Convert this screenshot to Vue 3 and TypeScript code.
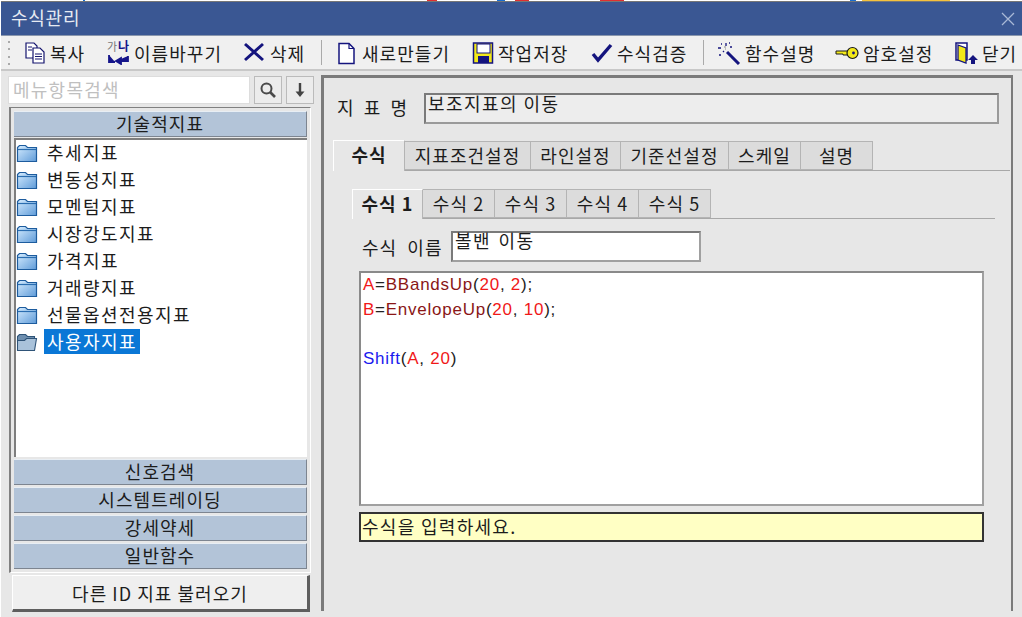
<script setup lang="ts">
import { ref } from 'vue'

const tools = ref([
  { id: 'copy', label: '복사', w: 83, tx: 2 },
  { id: 'rename', label: '이름바꾸기', w: 137, tx: 3 },
  { id: 'del', label: '삭제', w: 77, tx: 2 },
  { id: 'sep', label: '', w: 0, tx: 0 },
  { id: 'new', label: '새로만들기', w: 135, tx: 1 },
  { id: 'save', label: '작업저장', w: 119, tx: 2 },
  { id: 'check', label: '수식검증', w: 112, tx: 2 },
  { id: 'sep2', label: '', w: 0, tx: 0 },
  { id: 'wand', label: '함수설명', w: 118, tx: 4 },
  { id: 'key', label: '암호설정', w: 120, tx: 4 },
  { id: 'door', label: '닫기', w: 60, tx: 3 },
])
const folders = ['추세지표', '변동성지표', '모멘텀지표', '시장강도지표', '가격지표', '거래량지표', '선물옵션전용지표', '사용자지표']
const groups = ['신호검색', '시스템트레이딩', '강세약세', '일반함수']
const tabs = [
  { t: '수식', w: 72 }, { t: '지표조건설정', w: 126 }, { t: '라인설정', w: 90 },
  { t: '기준선설정', w: 108 }, { t: '스케일', w: 72 }, { t: '설명', w: 72 },
]
const subTabs = ['수식 1', '수식 2', '수식 3', '수식 4', '수식 5']
</script>

<template>
  <div class="screen">
    <div class="topstrip">
      <i class="bit" style="left:83px;width:2px;background:#1a6fd0"></i>
      <i class="bit" style="left:427px;width:10px;background:#e03030"></i>
      <i class="bit" style="left:497px;width:8px;background:#1a6fd0"></i>
      <i class="bit" style="left:515px;width:14px;background:#e03030"></i>
      <i class="bit" style="left:600px;width:24px;background:#e03030"></i>
      <i class="bit" style="left:850px;width:6px;background:#1a6fd0"></i>
      <i class="bit" style="left:862px;width:88px;background:#f5c23c"></i>
    </div>
    <div class="window">
      <header class="titlebar">
        <span class="title">수식관리</span>
        <svg class="close" width="14" height="14" viewBox="0 0 14 14"><path d="M1 1L13 13M13 1L1 13" stroke="#a9b8d6" stroke-width="1.3" fill="none"/></svg>
      </header>

      <div class="toolbar">
        <div class="grip"><i></i><i></i><i></i><i></i></div>
        <template v-for="(b, i) in tools" :key="i">
          <div v-if="b.id === 'sep'" class="sep"></div>
          <div v-else-if="b.id === 'sep2'" class="sep narrow"></div>
          <div v-else class="tool" :style="{ width: b.w + 'px' }">
            <span v-if="b.id === 'rename'" class="renameico" :style="{ marginRight: b.tx + 'px' }">
              <span class="ga">가</span>
              <span class="na">나</span>
              <svg width="24" height="24" viewBox="0 0 24 24" class="ico">
                <path d="M2 14v7h6M9 20h12v-5M14 17l-5 3 5 3z" fill="#14148a" stroke="#14148a" stroke-width="1.8"/>
              </svg>
            </span>
            <svg v-else width="24" height="24" viewBox="0 0 24 24" class="ico" :style="{ marginRight: b.tx + 'px' }">
              <g v-if="b.id === 'copy'" fill="#fff" stroke="#14146e" stroke-width="1.2">
                <path d="M2 2h8l3 3v12H2z" /><path d="M9 7h7l4 4v11H9z"/>
                <path d="M11 13h7M11 15.5h7M11 18h7M4 6h4M4 9h4" fill="none"/>
              </g>
              <g v-else-if="b.id === 'del'">
                <path d="M1 3L19 19M19 3L1 19" stroke="#14147e" stroke-width="3" fill="none"/>
              </g>
              <g v-else-if="b.id === 'new'">
                <path d="M2 2.5h10l5 5v15H2z" fill="#fff" stroke="#14147e" stroke-width="1.5"/>
                <path d="M12 2.5v5h5" fill="none" stroke="#14147e" stroke-width="1.2"/>
              </g>
              <g v-else-if="b.id === 'save'">
                <rect x="1.5" y="2" width="19" height="20" fill="#f2e81a" stroke="#14147e" stroke-width="1.5"/>
                <rect x="5" y="3" width="13" height="9" fill="#fff" stroke="#14147e"/>
                <rect x="6" y="15" width="11" height="7" fill="#14147e"/>
              </g>
              <g v-else-if="b.id === 'check'">
                <path d="M2 13l5 6L20 4" fill="none" stroke="#14147e" stroke-width="3.4"/>
              </g>
              <g v-else-if="b.id === 'wand'">
                <path d="M10 11L22 23" stroke="#14147e" stroke-width="3"/>
                <path d="M1 7h3M9 2v3M13 6h2M2 14h2M6 10l1 1M12 2h1M4 3h1" stroke="#14147e" stroke-width="1.3"/>
                <path d="M7 6h2M8 8h1" stroke="#888" stroke-width="1"/>
              </g>
              <g v-else-if="b.id === 'key'">
                <path d="M1 10h12v4H8v-1H1z" fill="#f3e91a" stroke="#1a1a1a" stroke-width="1"/>
                <circle cx="17.5" cy="12" r="5.5" fill="#f3e91a" stroke="#1a1a1a" stroke-width="1.2"/>
                <circle cx="18.5" cy="12" r="1.4" fill="#14147e"/>
              </g>
              <g v-else>
                <path d="M1 2h11v17H1z" fill="#fff" stroke="#14147e" stroke-width="1.5"/>
                <path d="M3 4l8 3v15l-8-3z" fill="#f2e81a" stroke="#14147e" stroke-width="1.3"/>
                <path d="M18 14l5 5h-3v4h-4v-4h-3z" fill="#14147e"/>
              </g>
            </svg>
            <span>{{ b.label }}</span>
          </div>
        </template>
      </div>

      <div class="body">
        <aside class="left">
          <div class="searchrow">
            <div class="search">메뉴항목검색</div>
            <button class="sbtn">
              <svg width="18" height="18" viewBox="0 0 18 18"><circle cx="7.5" cy="7.5" r="5" fill="none" stroke="#4a4a4a" stroke-width="2"/><path d="M11 11l5 5" stroke="#4a4a4a" stroke-width="2.6"/></svg>
            </button>
            <button class="sbtn">
              <svg width="14" height="16" viewBox="0 0 14 16"><path d="M7 1v10" stroke="#444" stroke-width="2.4"/><path d="M2.5 9.5h9L7 15z" fill="#444"/></svg>
            </button>
          </div>

          <div class="accordion">
            <div class="ghead first">기술적지표</div>
            <ul class="tree">
              <li v-for="(f, i) in folders" :key="f" class="node">
                <svg width="22" height="20" viewBox="0 0 22 20" class="folder">
                  <defs>
                    <linearGradient :id="'fg' + i" x1="0" y1="0" x2="1" y2="1">
                      <stop offset="0" stop-color="#d5ecff"/><stop offset="1" stop-color="#5f9bd8"/>
                    </linearGradient>
                  </defs>
                  <template v-if="i < 7">
                    <path d="M1.5 4.5l2-2h6l2 2h9v14h-19z" :fill="'url(#fg' + i + ')'" stroke="#1d5c9e" stroke-width="1.2"/>
                    <path d="M2 6.5h18" stroke="#2a6db0" stroke-width="1.2"/>
                  </template>
                  <template v-else>
                    <path d="M1.5 4.5l2-2h6l2 2h7v5h-17z" fill="#6d8eaf" stroke="#2f5478" stroke-width="1.1"/>
                    <path d="M1.5 18.5l-0-10h7l2-2h10l-2 12z" fill="#a9c2da" stroke="#2f5478" stroke-width="1.1"/>
                  </template>
                </svg>
                <span class="nlabel" :class="{ sel: i === 7 }">{{ f }}</span>
              </li>
            </ul>
            <div v-for="g in groups" :key="g" class="ghead">{{ g }}</div>
          </div>

          <button class="other">다른 ID 지표 불러오기</button>
        </aside>

        <main class="right">
          <div class="namerow">
            <span class="namelabel">지 표 명</span>
            <div class="namefield">보조지표의 이동</div>
          </div>

          <div class="tabs">
            <div v-for="(t, i) in tabs" :key="t.t" class="tab" :class="{ on: i === 0 }" :style="{ width: t.w + 'px' }">{{ t.t }}</div>
          </div>

          <div class="pane">
            <div class="subtabs">
              <div v-for="(t, i) in subTabs" :key="t" class="subtab" :class="{ on: i === 0 }">{{ t }}</div>
            </div>
            <div class="formula">
              <span class="flabel">수식 이름</span>
              <div class="finput">볼밴 이동</div>
            </div>
            <div class="editor">
              <div><b class="r">A</b>=<b class="d">BBandsUp</b>(<b class="r">20</b>, <b class="r">2</b>);</div>
              <div><b class="r">B</b>=<b class="d">EnvelopeUp</b>(<b class="r">20</b>, <b class="r">10</b>);</div>
              <div>&nbsp;</div>
              <div><b class="u">Shift</b>(<b class="r">A</b>, <b class="r">20</b>)</div>
            </div>
            <div class="hint">수식을 입력하세요.</div>
          </div>
        </main>
      </div>
    </div>
  </div>
</template>

<style scoped>
.screen { width: 1022px; height: 617px; background: #fff; overflow: hidden; position: relative; font-family: "Noto Sans CJK KR", "Liberation Sans", sans-serif; color: #1c1c1c; }
.topstrip { height: 1px; position: relative; }
.bit { position: absolute; top: 0; height: 1px; }
.window { margin-left: 1px; height: 616px; background: #e7e7e7; border-top: 1px solid #777; display: flex; flex-direction: column; }
.titlebar { height: 33px; background: #3a5793; display: flex; align-items: center; justify-content: space-between; padding: 0 7px 0 10px; border-bottom: 1px solid #8a97ad; box-sizing: content-box; }
.title { color: #e6eaf2; font-size: 18px; letter-spacing: 0.75px; padding-bottom: 3px; }
.toolbar { height: 33px; background: #f0f0f0; display: flex; align-items: center; padding-left: 7px; border-bottom: 2px solid #c8c8c8; }
.grip { width: 7px; height: 24px; margin-right: 9px; display: flex; flex-direction: column; justify-content: space-between; padding-top: 1px; }
.grip i { width: 2px; height: 2px; background: #aaa; display: block; }
.tool { display: flex; align-items: center; font-size: 18px; letter-spacing: 1.05px; white-space: nowrap; flex: none; }
.ico { flex: none; display: block; }
.renameico { position: relative; width: 24px; height: 24px; flex: none; display: block; }
.ga, .na { position: absolute; top: -1px; line-height: 12px; letter-spacing: 0; }
.ga { left: 0; font-size: 11px; color: #777; }
.na { left: 11px; font-size: 12px; font-weight: 700; color: #14148a; }
.sep { width: 1px; height: 25px; background: #aaa; margin-right: 15px; flex: none; }
.sep.narrow { margin-right: 13px; }
.body { flex: 1; display: flex; padding: 4px 9px 6px 3px; gap: 6px; min-height: 0; }
.left { width: 311px; display: flex; flex-direction: column; flex: none; }
.searchrow { display: flex; gap: 4px; padding: 1px 0 0 4px; height: 29px; box-sizing: border-box; }
.search { width: 242px; height: 28px; background: #fff; box-sizing: border-box; border: 1px solid #ddd; color: #c0c0c0; font-size: 18px; letter-spacing: 1.25px; line-height: 25px; padding-left: 4px; }
.sbtn { width: 28px; height: 28px; padding: 0; background: #ececec; border: 1px solid #fff; border-right-color: #8f8f8f; border-bottom-color: #8f8f8f; display: flex; align-items: center; justify-content: center; outline: 1px solid #bbb; outline-offset: -1px; }
.accordion { margin: 3px 0 0 5px; width: 302px; height: 467px; box-sizing: border-box; padding: 3px 3px 3px 3px; border: 1px solid #fff; border-left: 2px solid #808080; border-top-color: #808080; display: flex; flex-direction: column; gap: 2px; }
.ghead { flex: none; background: #b3c4d8; border-bottom: 1px solid #7d8590; border-right: 1px solid #7d8590; border-top: 1px solid #e8eef4; text-align: center; font-size: 18px; line-height: 22px; letter-spacing: 1.05px; height: 24px; }
.ghead.first { margin-bottom: -1px; }
.tree { flex: 1; min-height: 0; background: #fff; margin: 0; padding: 0; list-style: none; border-left: 2px solid #7e7e7e; border-top: 2px solid #7e7e7e; }
.node { height: 27px; display: flex; align-items: center; }
.node:first-child { margin-top: -1px; }
.folder { flex: none; margin-right: 6px; }
.nlabel { font-size: 18px; letter-spacing: 1.45px; line-height: 25px; padding: 0 3px; }
.nlabel.sel { background: #0a77d6; color: #fff; }
.other { margin: 2px 0 0 8px; width: 298px; height: 37px; background: #efefef; border: none; border-top: 1px solid #fff; border-left: 1px solid #fff; border-right: 3px solid #5e5e5e; border-bottom: 3px solid #5e5e5e; font-family: inherit; font-size: 18px; letter-spacing: 1.05px; color: #1c1c1c; padding: 0; }
.right { flex: 1; border-left: 3px solid #7b7b7b; border-top: 3px solid #7b7b7b; border-right: 2px solid #7b7b7b; background: #e7e7e7; margin-bottom: 1px; padding: 15px 1px 0 9px; }
.namerow { display: flex; align-items: center; height: 31px; padding-left: 4px; }
.namelabel { width: 87px; font-size: 18px; letter-spacing: 1.05px; word-spacing: 4px; flex: none; padding-bottom: 3px; }
.namefield { width: 575px; height: 31px; box-sizing: border-box; background: #ededed; border: 2px solid #7a7a7a; border-bottom-color: #9a9a9a; border-right-color: #9a9a9a; font-size: 18px; letter-spacing: 1.45px; line-height: 17px; padding-left: 2px; }
.tabs { display: flex; margin-top: 16px; height: 30px; border-bottom: 1px solid #a8a8a8; }
.tab { box-sizing: border-box; height: 29px; margin-top: 1px; background: #dcdcdc; border: 1px solid #b4b4b4; border-left: none; text-align: center; font-size: 18px; line-height: 26px; letter-spacing: 1.05px; }
.tab.on { height: 31px; margin-top: 0; background: #e7e7e7; border-left: 1px solid #fff; border-top: 1px solid #fff; border-bottom: none; font-weight: 700; position: relative; z-index: 1; }
.pane { padding: 18px 0 0 19px; }
.subtabs { display: flex; width: 643px; height: 30px; border-bottom: 1px solid #a8a8a8; box-sizing: border-box; }
.subtab { box-sizing: border-box; width: 72px; height: 29px; background: #dcdcdc; border: 1px solid #b4b4b4; border-left: none; text-align: center; font-size: 18px; line-height: 26px; letter-spacing: 1.05px; }
.subtab.on { height: 30px; width: 71px; background: #e7e7e7; border-left: 1px solid #fff; border-top: 1px solid #fff; border-bottom: none; font-weight: 700; }
.formula { display: flex; align-items: center; margin-top: 12px; margin-left: 10px; }
.flabel { width: 89px; flex: none; font-size: 18px; letter-spacing: 1.05px; word-spacing: 5px; }
.finput { width: 250px; height: 31px; box-sizing: border-box; background: #fff; border: 2px solid #7a7a7a; border-bottom-color: #a0a0a0; border-right-color: #a0a0a0; font-size: 18px; letter-spacing: 1.45px; word-spacing: 2px; line-height: 15px; padding-left: 2px; }
.editor { margin: 9px 0 0 7px; width: 625px; height: 235px; box-sizing: border-box; background: #fff; border: 2px solid #8a8a8a; border-bottom-color: #a0a0a0; border-right-color: #a0a0a0; padding: 0 0 0 2px; font-family: "Liberation Sans", sans-serif; font-size: 17px; line-height: 24.5px; letter-spacing: 0.75px; color: #222; }
.editor b { font-weight: 400; }
.r { color: #f01818; }
.d { color: #8a1616; }
.u { color: #1a1aee; }
.hint { margin: 6px 0 0 7px; width: 625px; height: 30px; box-sizing: border-box; background: #ffffc4; border: 2px solid #333; font-size: 18px; letter-spacing: 1.3px; line-height: 24px; padding-left: 1px; }
</style>
